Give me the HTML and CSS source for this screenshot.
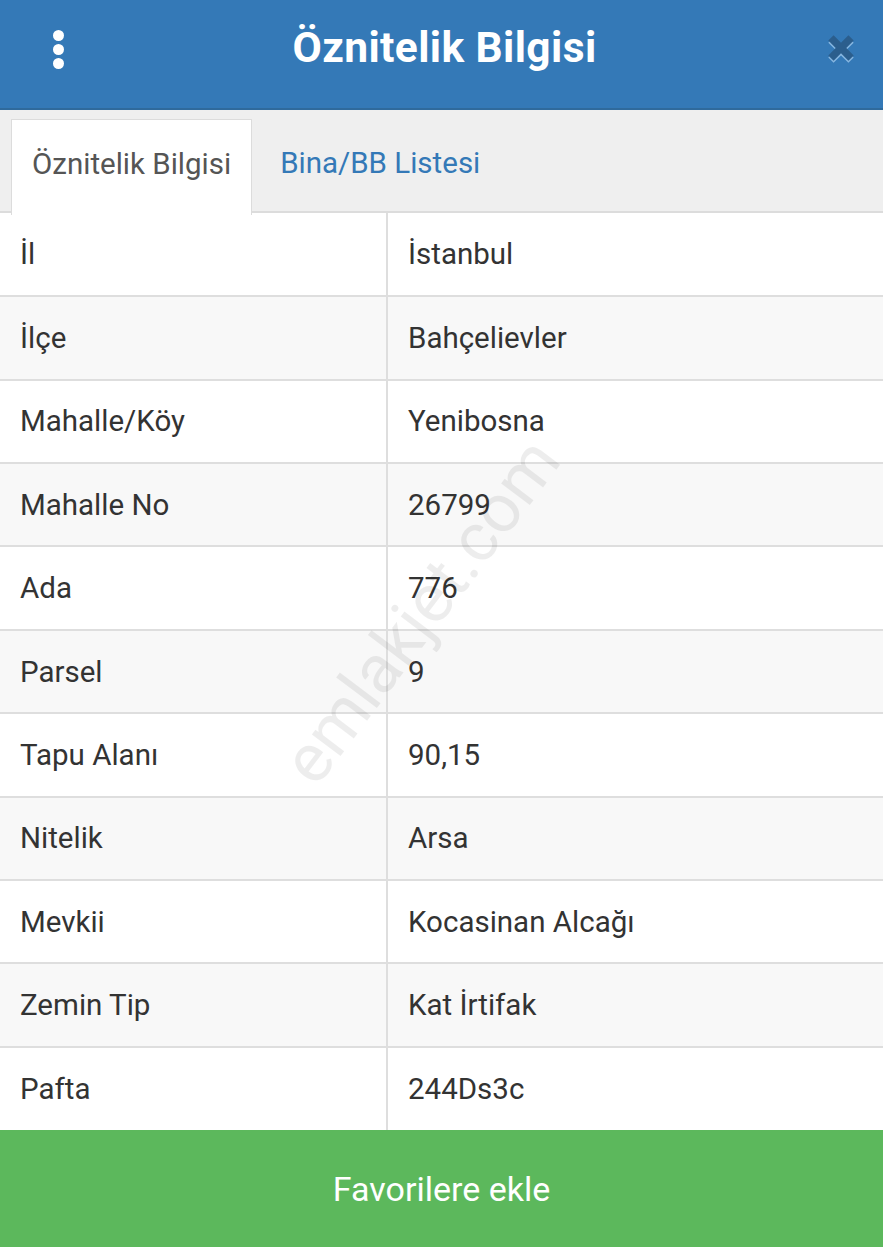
FILE: index.html
```html
<!DOCTYPE html>
<html lang="tr">

<head>
  <meta charset="UTF-8">
  <meta name="viewport" content="width=device-width, initial-scale=1.0">
  <title>Öznitelik Bilgisi</title>
  <link rel="stylesheet" href="styles.css">
</head>

<body>
  <div class="modal">
    <div class="modal-header">
      <button type="button" class="menu">
        <span></span><span></span><span></span>
      </button>
      <h1 class="title">Öznitelik Bilgisi</h1>
      <button type="button" class="close">
        <svg width="36" height="36" viewBox="0 0 34 34">
          <path d="M5 10 L10 5 L17 12 L24 5 L29 10 L22 17 L29 24 L24 29 L17 22 L10 29 L5 24 L12 17 Z" fill="#86b6e0" transform="translate(0 2)"/>
          <path d="M5 10 L10 5 L17 12 L24 5 L29 10 L22 17 L29 24 L24 29 L17 22 L10 29 L5 24 L12 17 Z" fill="#2b5e8d"/>
        </svg>
      </button>
    </div>

    <ul class="tabs">
      <li class="active">Öznitelik Bilgisi</li>
      <li>Bina/BB Listesi</li>
    </ul>

    <div class="content">
      <table class="info">
        <tr><td>İl</td><td>İstanbul</td></tr>
        <tr><td>İlçe</td><td>Bahçelievler</td></tr>
        <tr><td>Mahalle/Köy</td><td>Yenibosna</td></tr>
        <tr><td>Mahalle No</td><td>26799</td></tr>
        <tr><td>Ada</td><td>776</td></tr>
        <tr><td>Parsel</td><td>9</td></tr>
        <tr><td>Tapu Alanı</td><td>90,15</td></tr>
        <tr><td>Nitelik</td><td>Arsa</td></tr>
        <tr><td>Mevkii</td><td>Kocasinan Alcağı</td></tr>
        <tr><td>Zemin Tip</td><td>Kat İrtifak</td></tr>
        <tr><td>Pafta</td><td>244Ds3c</td></tr>
      </table>
      <div class="watermark">emlakjet.com</div>
    </div>

    <button type="button" class="favorite">Favorilere ekle</button>
  </div>
</body>

</html>
```

FILE: styles.css
```css
* {
  box-sizing: border-box;
}

body {
  margin: 0;
  font-family: Roboto, "Noto Sans", sans-serif;
  background-color: #fff;
}

.modal {
  width: 883px;
  height: 1247px;
  display: flex;
  flex-direction: column;
  overflow: hidden;
}

.modal-header {
  height: 110px;
  background-color: #3479b7;
  border-bottom: 2px solid #2f6a9c;
  display: flex;
  align-items: center;
  justify-content: space-between;
  padding: 0 24px 12px 40px;
}

.modal-header button {
  background: none;
  border: none;
  padding: 0;
  cursor: pointer;
}

.menu {
  width: 36px;
  display: flex;
  flex-direction: column;
  align-items: center;
  gap: 3px;
  margin-top: 4px;
}

.menu span {
  width: 11px;
  height: 11px;
  border-radius: 50%;
  background-color: #fff;
}

.title {
  margin: 0 10px 0 0;
  color: #fff;
  font-size: 42.5px;
  font-weight: 700;
  letter-spacing: 0.4px;
}

.close {
  width: 36px;
  height: 38px;
  margin-top: 2px;
}

.tabs {
  margin: 0;
  padding: 9px 0 0 11px;
  list-style: none;
  display: flex;
  height: 103px;
  background-color: #efefef;
  border-bottom: 2px solid #dcdcdc;
}

.tabs li {
  padding: 0 20px;
  height: 94px;
  line-height: 88px;
  font-size: 29.5px;
  color: #3479b7;
  margin-right: 8px;
}

.tabs li.active {
  color: #555;
  background-color: #fff;
  border: 1px solid #dcdcdc;
  border-bottom: none;
  margin-bottom: -2px;
  height: 96px;
}

.content {
  flex: 1;
  position: relative;
}

.info {
  width: 100%;
  border-collapse: collapse;
}

.info tr {
  height: 83.4px;
}

.info tr:nth-child(even) {
  background-color: #f8f8f8;
}

.info td {
  padding: 0 20px;
  font-size: 29.5px;
  color: #333;
  border-bottom: 2px solid #dedede;
}

.info td:first-child {
  width: 387px;
  border-right: 2px solid #dedede;
}

.info tr:last-child td {
  border-bottom: none;
}

.watermark {
  position: absolute;
  left: 216px;
  top: 358px;
  font-size: 68px;
  color: rgba(0, 0, 0, .07);
  transform: rotate(-53deg);
  pointer-events: none;
  white-space: nowrap;
}

.favorite {
  height: 117px;
  border: none;
  background-color: #5cb85c;
  color: #fff;
  font-family: Roboto, "Noto Sans", sans-serif;
  font-size: 34px;
  padding-bottom: 0;
  cursor: pointer;
}
```
